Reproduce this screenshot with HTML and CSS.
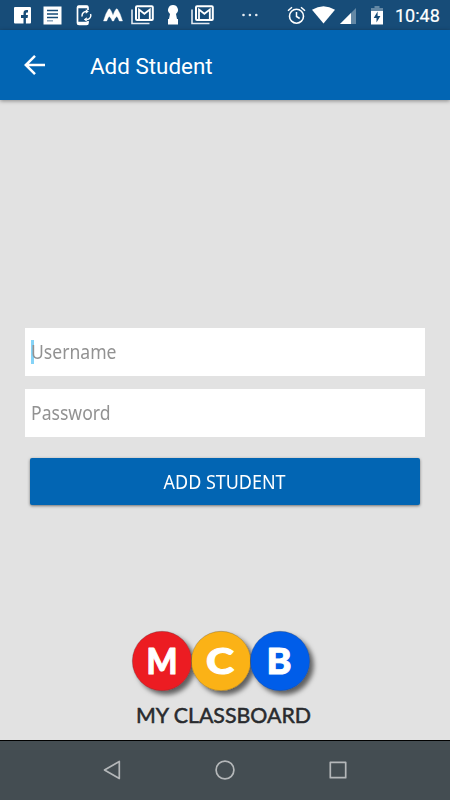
FILE: index.html
```
<!DOCTYPE html>
<html lang="en">
<head>
<meta charset="utf-8">
<title>Add Student</title>
<link rel="stylesheet" href="styles.css">
</head>
<body>
<svg width="0" height="0" class="defs"><defs>
<symbol id="mail" viewBox="0 0 23 20"><path d="M1 4.500v14h17.500" fill="none" stroke="#e3e9f2" stroke-width="1.600"/><rect x="5" y="1.200" width="16.800" height="13.800" rx="1" fill="none" stroke="#fff" stroke-width="2"/><path d="M8 14V4.500l5.400 4.300 5.400-4.300V14" fill="none" stroke="#fff" stroke-width="1.800"/></symbol>
</defs></svg>
<div class="screen">
  <div class="status">
    <svg class="fb" width="17" height="17" viewBox="0 0 17 17"><rect width="17" height="16.500" rx="1" fill="#fff"/><path d="M9.500 17v-6H7V8h2.500V6.200Q9.500 3 12.500 3H14v2.600h-1q-1.100 0-1.100 1.100V8H14l-.4 3h-1.700v6z" fill="#174c78"/></svg>
    <svg class="doc" width="19" height="19" viewBox="0 0 19 19"><rect x=".5" y=".5" width="18" height="18" fill="#fff"/><path d="M4 4.500h11M4 8h11M4 11.500h11" stroke="#174c78" stroke-width="1.500"/><path d="M4 14.800h6" stroke="#8ca6bd" stroke-width="1.500"/></svg>
    <svg class="phone" width="16" height="21" viewBox="0 0 16 21"><path d="M12 5V2.500Q12 1 10.500 1H3Q1.500 1 1.500 2.500v15.500q0 1.500 1.500 1.500h7.500q1.500 0 1.500-1.500v-2" fill="none" stroke="#fff" stroke-width="1.700"/><path d="M2 2h10M2 18h10" stroke="#fff" stroke-width="2.500"/><path d="M6.200 11.500a4 4 0 0 1 4-5M14.500 9a4 4 0 0 1-4 5.500" fill="none" stroke="#fff" stroke-width="1.400"/><path d="M9.800 4.300v4.400l3-2.200zM10.800 12.300v4.400l-3-2.200z" fill="#fff"/></svg>
    <svg class="moto" width="20" height="14" viewBox="0 0 20 14"><path d="M.5 13Q2.500 5.500 5.500 1.200q.9-.8 1.700.2Q8.700 3.500 10 7.500q1.300-4 2.800-6.100.8-1 1.700-.2Q17.500 5.500 19.500 13h-3.200q-.8-2.800-2.500-4.800Q11.500 10.500 10.700 13H9.300Q8.500 10.500 6.200 8.200 4.500 10.200 3.700 13z" fill="#fff" stroke="#fff" stroke-width=".4"/></svg>
    <svg class="mail1" width="23" height="20"><use href="#mail"/></svg>
    <svg class="key" width="12" height="20" viewBox="0 0 12 20"><path d="M6 0a5 5 0 0 1 3 9l1 5h1v5.500H1V14h1l1-5a5 5 0 0 1 3-9z" fill="#fff"/></svg>
    <svg class="mail2" width="23" height="20"><use href="#mail"/></svg>
    <svg class="dots" width="16" height="4" viewBox="0 0 16 4"><g fill="#e6ecf2"><circle cx="1.500" cy="2" r="1.300"/><circle cx="7.900" cy="2" r="1.300"/><circle cx="14.300" cy="2" r="1.300"/></g></svg>
    <svg class="clock" width="19" height="19" viewBox="0 0 19 19"><circle cx="9.500" cy="10.200" r="7" fill="none" stroke="#fff" stroke-width="1.600"/><path d="M9.500 6v4.500l3.200 2M1 4.800 5 1.300M18 4.800l-4-3.500" fill="none" stroke="#fff" stroke-width="1.500"/></svg>
    <svg class="wifi" width="23" height="18" viewBox="0 0 23 18"><path d="M0 3.800Q11.500-3.500 23 3.800L11.500 17.500z" fill="#fff"/></svg>
    <svg class="signal" width="16" height="16" viewBox="0 0 16 16"><path d="M0 16 16 0v16z" fill="#6488a5"/><path d="M0 16 11 5v11z" fill="#fff"/></svg>
    <svg class="battery" width="12" height="19" viewBox="0 0 12 19"><path d="M0 2h3.500V0h5v2H12v3H0z" fill="#6488a5"/><path d="M0 5h12v13.500H0z" fill="#fff"/><path d="M6.600 5.500 2.700 12h2.800v4.500L9.400 10H6.600z" fill="#174c78"/></svg>
    <span class="time">10:48</span>
  </div>
  <header class="bar">
    <svg width="22" height="22" viewBox="0 0 22 22"><path d="M21 11H2.500M11 1.800 1.800 11l9.200 9.200" fill="none" stroke="#fff" stroke-width="2.500"/></svg>
    <h1>Add Student</h1>
  </header>
  <main>
    <form>
      <div class="field focused"><span>Username</span></div>
      <div class="field"><span>Password</span></div>
      <button type="button"><span>ADD STUDENT</span></button>
    </form>
    <svg class="logo" width="190" height="100" viewBox="0 0 190 100" role="img">
      <defs><filter id="shade" x="-20%" y="-20%" width="150%" height="150%"><feDropShadow dx="4" dy="4" stdDeviation="2.500" flood-color="#000" flood-opacity=".58"/></filter></defs>
      <g filter="url(#shade)"><circle cx="32" cy="31" r="29.700" fill="#ec1b24"/><circle cx="91" cy="31" r="29.700" fill="#fbb219"/><circle cx="150" cy="31" r="29.700" fill="#005de9"/></g>
      <g fill="none" stroke="#333" stroke-opacity=".45" stroke-width=".6"><circle cx="32" cy="31" r="29.700"/><circle cx="91" cy="31" r="29.700"/><circle cx="150" cy="31" r="29.700"/></g>
      <g class="letters"><text x="16.500" y="44" textLength="31" lengthAdjust="spacingAndGlyphs">M</text><text x="76" y="44" textLength="28" lengthAdjust="spacingAndGlyphs">C</text><text x="136.500" y="44" textLength="25" lengthAdjust="spacingAndGlyphs">B</text></g>
      <text class="brand" x="6" y="92.500" textLength="175" lengthAdjust="spacingAndGlyphs">MY CLASSBOARD</text>
    </svg>
  </main>
  <nav>
    <svg width="18" height="20" viewBox="0 0 18 20"><path d="M16.300 1.500v17L1.500 10z"/></svg>
    <svg width="20" height="20" viewBox="0 0 20 20"><circle cx="10" cy="10" r="8.900"/></svg>
    <svg width="18" height="18" viewBox="0 0 18 18"><rect x="1.300" y="1.300" width="15.400" height="15.400"/></svg>
  </nav>
</div>
</body>
</html>
```
FILE: styles.css
```
* { box-sizing: border-box; }
body { margin: 0; }
svg { display: block; flex: none; }
.defs { position: absolute; }
.screen { width: 450px; height: 800px; display: flex; flex-direction: column; background: #e2e2e2; overflow: hidden; }
.status { height: 30px; flex: none; display: flex; align-items: center; background: #174c78; color: #fff; }
.fb { margin-left: 14px; }
.doc { margin-left: 12px; }
.phone { margin-left: 14px; }
.moto { margin-left: 11px; }
.mail1 { margin-left: 8px; }
.key { margin-left: 13px; }
.mail2 { margin-left: 12px; }
.dots { margin-left: 28px; }
.clock { margin-left: 29px; }
.wifi { margin-left: 6px; }
.signal { margin-left: 5px; margin-top: 2px; }
.battery { margin-left: 15px; margin-top: 1px; }
.time { margin-left: 12px; margin-top: 1px; font: 400 18px/20px Roboto, sans-serif; -webkit-text-stroke: .2px #fff; white-space: nowrap; }
.bar { height: 70px; flex: none; display: flex; align-items: center; padding-left: 24px; background: #0265b3; color: #fff; box-shadow: 0 1px 4px rgba(0,0,0,.4); z-index: 1; }
h1 { margin: 1px 0 0 44px; font: 400 22.4px/30px Roboto, sans-serif; }
main { flex: 1; display: flex; flex-direction: column; padding: 228px 25px 0; }
.field { height: 48px; margin-bottom: 13px; padding-left: 6px; display: flex; align-items: center; background: #fff; color: #929292; font: 19px/24px "Noto Sans", sans-serif; position: relative; }
.field.focused::before { content: ""; position: absolute; left: 6px; top: 12px; width: 2.5px; height: 24px; background: #85d3f7; }
.field span { position: relative; transform: scaleX(.925); transform-origin: left; }
button { display: flex; align-items: center; justify-content: center; width: 390px; height: 47px; margin: 21px 5px 0; padding: 0; border: 0; border-radius: 2px; background: #0265b3; color: #fff; box-shadow: 0 1px 3px rgba(0,0,0,.5); font: 19px/24px "Noto Sans", sans-serif; }
button span { transform: scaleX(.945); }
.logo { margin: 125px 0 0 105px; }
.letters { font: 900 36px Lato, sans-serif; fill: #fff; stroke: #fff; stroke-width: 1; stroke-linejoin: round; }
.brand { font: 400 20.5px Lato, sans-serif; fill: #292b2e; stroke: #292b2e; stroke-width: .5; }
nav { height: 60px; flex: none; display: flex; align-items: center; gap: 94px; padding-left: 103px; background: #444d52; border-top: 1px solid #000; }
nav svg { fill: none; stroke: #b4b7b9; stroke-width: 1.7; stroke-linejoin: round; position: relative; top: -1px; }
```
